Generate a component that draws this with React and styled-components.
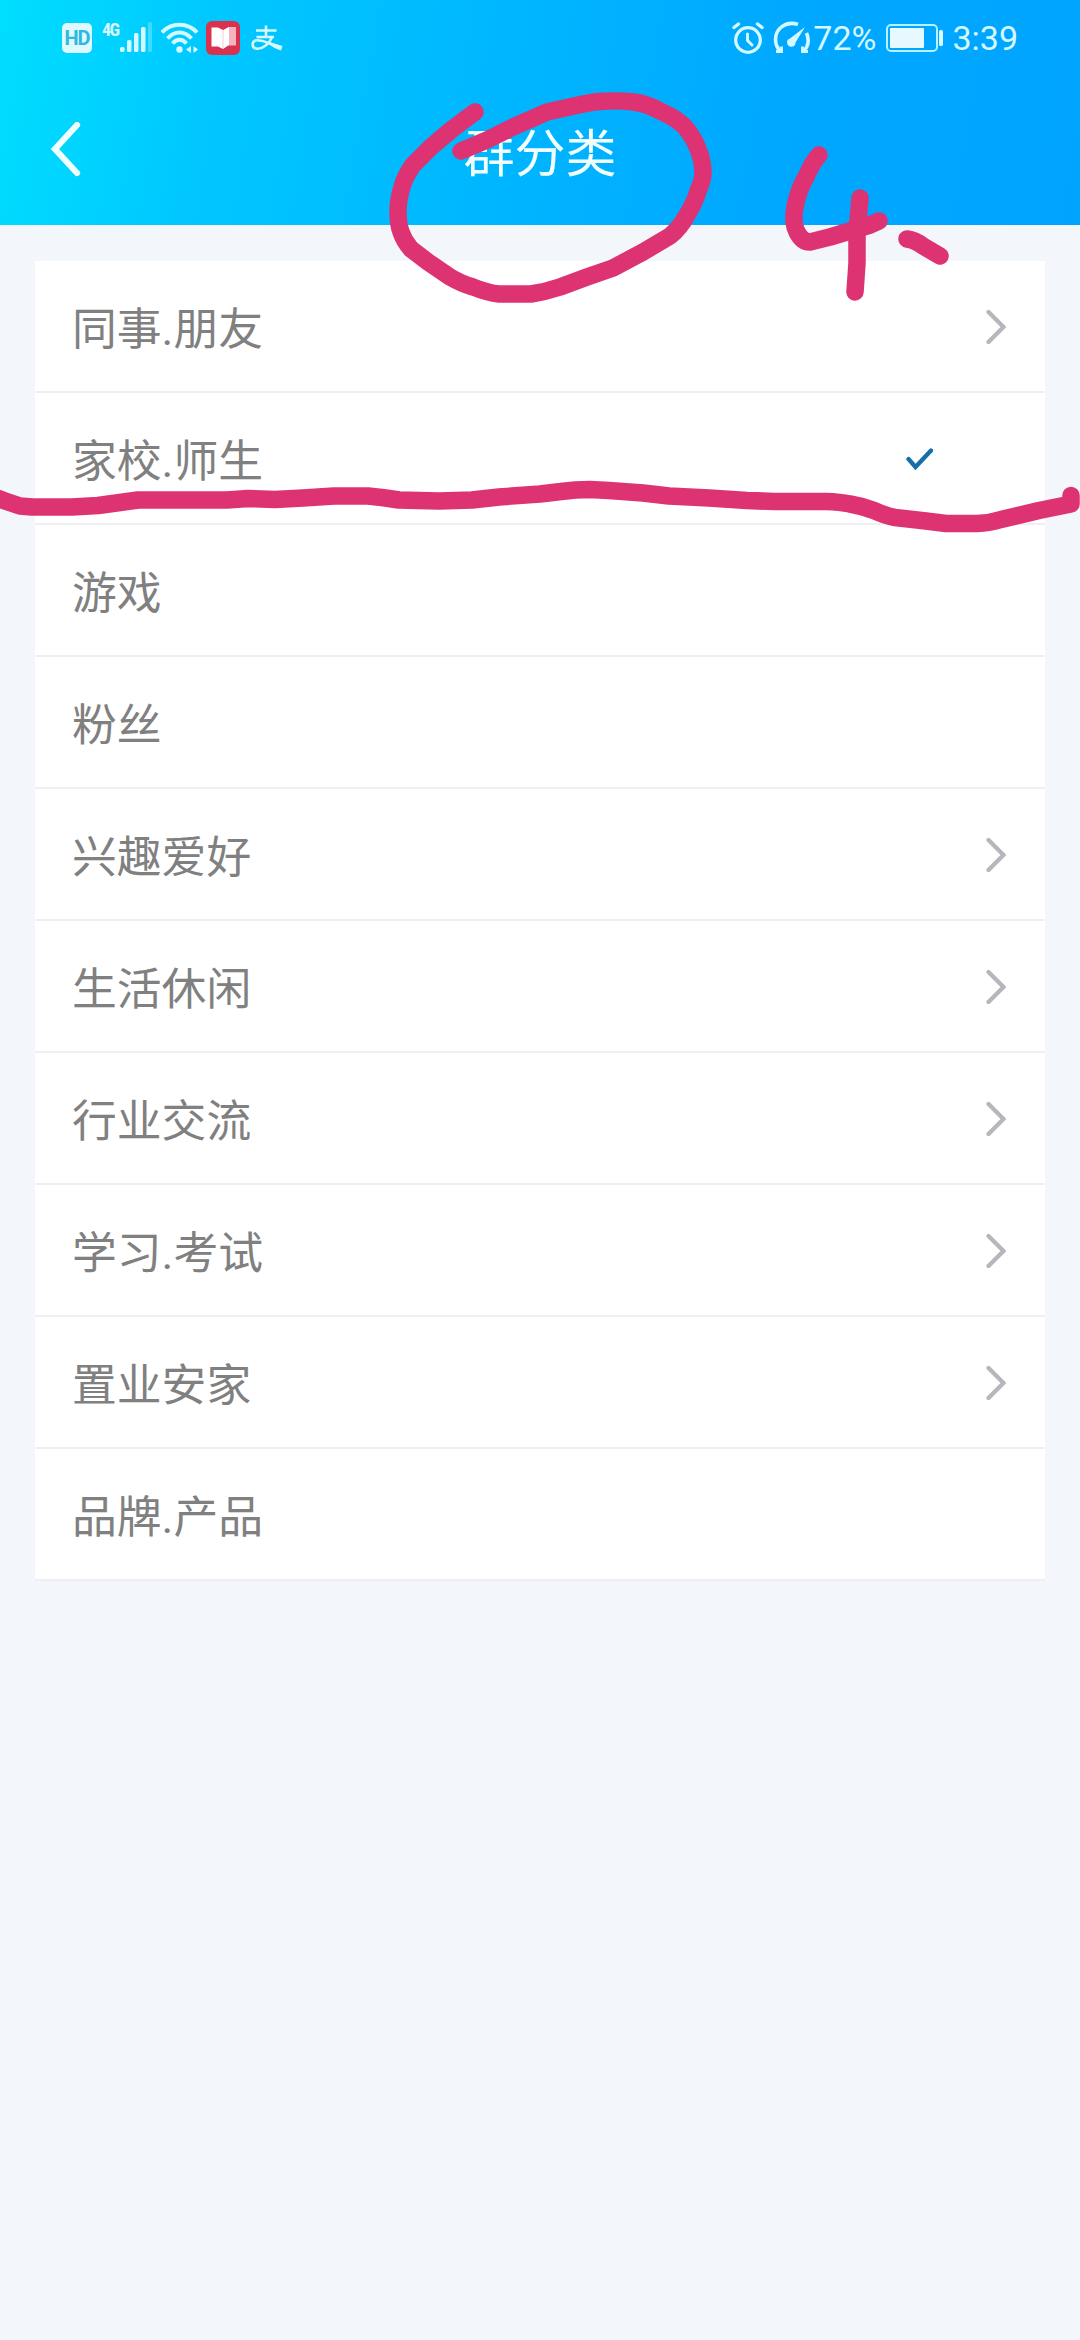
import React from 'react';
import styled, { createGlobalStyle } from 'styled-components';

const categories = [
  { name: '同事.朋友', more: true },
  { name: '家校.师生', checked: true },
  { name: '游戏' },
  { name: '粉丝' },
  { name: '兴趣爱好', more: true },
  { name: '生活休闲', more: true },
  { name: '行业交流', more: true },
  { name: '学习.考试', more: true },
  { name: '置业安家', more: true },
  { name: '品牌.产品' },
];

const StatusIcons = () => (
  <StatusBar>
    <StatusGroup>
      <HdBadge>HD</HdBadge>
      <NetworkLabel>4G</NetworkLabel>
      <StatusIcon width="32" height="34" viewBox="0 0 32 34">
        <g fill="#d4f9ff">
          <rect x="0" y="26" width="4.500" height="5" rx="1.500" />
          <rect x="7" y="19" width="4.500" height="12" rx="1.500" />
          <rect x="14" y="12" width="4.500" height="19" rx="1.500" />
          <rect x="21" y="6" width="4.500" height="25" rx="1.500" />
          <rect x="28" y="1" width="4" height="30" rx="1.500" opacity="0.3" />
        </g>
      </StatusIcon>
      <StatusIcon width="38" height="34" viewBox="0 0 38 34" $left={9}>
        <g fill="none" stroke="#d4f9ff" strokeWidth="4" strokeLinecap="butt">
          <path d="M1 11.500C10 1 27 1 36 11.500" />
          <path d="M6.500 17.500C13.500 9.500 23.500 9.500 30.500 17.500" />
          <path d="M11.500 22.500C16 17.500 21 17.500 25.500 22.500" />
        </g>
        <circle cx="18.500" cy="28.500" r="3.200" fill="#d4f9ff" />
        <path d="M30 25v7l-5-3.500zM32.500 25v7l4.500-3.500z" fill="#d4f9ff" />
      </StatusIcon>
      <StatusIcon width="34" height="34" viewBox="0 0 34 34" $left={7}>
        <rect width="34" height="34" rx="6" fill="#d9324f" />
        <path d="M22 6H30V24.500H22z" fill="#f5b3c0" />
        <path d="M5.500 6.500H12L17 9L23 6V24L17 28L12 25.500H5.500z" fill="#fff" />
        <path d="M17 9V27" stroke="#f3c3cc" strokeWidth="0.800" />
      </StatusIcon>
      <StatusIcon width="32" height="30" viewBox="0 0 32 30" $left={11}>
        <g fill="none" stroke="#d4f9ff" strokeWidth="2.600">
          <path d="M5 7.500H25.500M15 2.500V14M5.500 14H23" />
          <path d="M21.500 13.500C18 21 12 26 6 25.700C.3 25.300.300 18.300 5.500 17.300C11 16.500 18 20.500 29.500 24" />
        </g>
        <path d="M17 19L31.500 23L30 27.500C25 26 21 23.500 17 21z" fill="#d4f9ff" />
      </StatusIcon>
    </StatusGroup>

    <StatusGroup>
      <StatusIcon width="32" height="34" viewBox="0 0 32 34">
        <g fill="none" stroke="#d4f9ff" strokeLinecap="round">
          <circle cx="16" cy="19" r="12.300" strokeWidth="3.200" />
          <path d="M2 6.500L6.500 3M30 6.500L25.500 3" strokeWidth="3.400" />
          <path d="M15.500 13v6.500l4.500 4.500" strokeWidth="3" />
        </g>
      </StatusIcon>
      <StatusIcon width="38" height="34" viewBox="0 0 38 34" $left={9}>
        <g fill="none" stroke="#d4f9ff" strokeWidth="3.600">
          <path d="M25 3.400C13-.5 2.500 7.500 2.500 18.500C2.500 23.500 4.500 27.500 8 31" />
          <path d="M33.500 12C36.500 19 35 26 30 31" />
          <path d="M3 30.500H8.500V25.500M35 30.500H29.500V25.500" strokeWidth="2.800" />
        </g>
        <path d="M32 6L22.500 21.500a4.200 4.200 0 1 1-5.500-4z" fill="#d4f9ff" />
      </StatusIcon>
      <StatusText $left={2}>72%</StatusText>
      <StatusIcon width="58" height="28" viewBox="0 0 58 28" $left={9}>
        <rect x="2" y="1" width="50" height="26" rx="4" fill="none" stroke="#b4f2ff" strokeWidth="2" />
        <rect x="5" y="4" width="34" height="20" rx="1" fill="#e8f8ff" />
        <rect x="54" y="6" width="4" height="16" rx="1.500" fill="#d4f9ff" />
      </StatusIcon>
      <StatusText $left={9}>3:39</StatusText>
    </StatusGroup>
  </StatusBar>
);

const InkMarks = () => (
  <InkLayer viewBox="0 0 1080 600">
    <path d="M475 112L451 130L431 147L413 165Q405 176 402 187Q398 200 398 212Q398 224 401 232Q404 241 411 249L428 262L450 277Q462 284 473 287Q488 293 499 294H531Q545 292 560 287L587 277L613 268L643 252L670 236Q680 228 687 215Q695 202 698 191Q703 180 703 173Q703 161 698 149Q694 138 685 127Q676 118 662 112Q648 104 634 102Q620 100.500 608 101Q596 101 583 104L547 112L513 127L487 140L461 151" />
    <path d="M819 155Q812 163 807 175Q798 190 795 207Q792 223 797 232Q802 242 810 242L830 237L850 231L870 225L879 221" />
    <path d="M860 198L857 233V263L855 292" />
    <path d="M907 239Q915 240 923 246L940 256" />
    <path d="M-6 497L5 501L20 506L32 507H72L98 505.500L120 502.500L138 500H227L248 498.500L275 499.500L303 498L334 496H368Q384 497.500 399 500L439 501L472 500L499 497L540 494L561 491.500Q575 489.500 590 489.500L609 490.500L643 493L669 496L709 498L747 500.500L774 501.500H826Q840 502 850 504Q862 506 874 510.500Q886 516 895 517.500L926 521L946 523.500H977Q990 523 1001 519.500L1039 510.500L1071 504V495.500" />
  </InkLayer>
);

const App = () => {
  return (
    <Page>
      <GlobalStyle />
      <Header>
        <StatusIcons />
        <TitleBar>
          <BackButton aria-label="返回">
            <svg width="32" height="56" viewBox="0 0 32 56">
              <path d="M28 3L6 27L28 51" fill="none" stroke="#f2ffff" strokeWidth="6.200" strokeLinecap="round" />
            </svg>
          </BackButton>
          <Title>群分类</Title>
        </TitleBar>
      </Header>

      <List>
        {categories.map(({ name, more, checked }) => (
          <Row key={name} $checked={checked}>
            <RowLabel>{name}</RowLabel>
            {more && (
              <svg width="22" height="36" viewBox="0 0 22 36">
                <path d="M4.500 4L19.500 19L4.500 34" fill="none" stroke="#b6b6be" strokeWidth="4.300" strokeLinecap="round" />
              </svg>
            )}
            {checked && (
              <svg width="28" height="26" viewBox="0 0 28 26">
                <path d="M3.500 14L10.500 22L26 5.500" fill="none" stroke="#146fa9" strokeWidth="4.300" strokeLinecap="round" />
              </svg>
            )}
          </Row>
        ))}
      </List>
      <InkMarks />
    </Page>
  );
};

const GlobalStyle = createGlobalStyle`
  body {
    margin: 0;
    background-color: #f3f6fa;
  }
`;

const Page = styled.div`
  position: relative;
  width: 1080px;
  min-height: 2340px;
  overflow: hidden;
  background-color: #f3f6fa;
  font-family: 'Noto Sans CJK SC', sans-serif;
`;

const Header = styled.header`
  display: flex;
  flex-direction: column;
  height: 225px;
  background: linear-gradient(100deg, #00deff 0%, #00c7ff 20%, #00b5ff 48%, #00a7ff 74%, #00a4ff 100%);
`;

const StatusBar = styled.div`
  display: flex;
  align-items: center;
  justify-content: space-between;
  height: 76px;
  padding: 0 62px;
  box-sizing: border-box;
`;

const StatusGroup = styled.div`
  display: flex;
  align-items: center;
`;

const StatusIcon = styled.svg`
  flex: none;
  margin-left: ${({ $left }) => $left || 0}px;
`;

const HdBadge = styled.span`
  width: 30px;
  height: 30px;
  border-radius: 5px;
  background-color: #dcfaff;
  color: #2fb9de;
  font-family: Roboto, sans-serif;
  font-size: 20px;
  font-weight: 700;
  line-height: 31px;
  text-align: center;
  letter-spacing: -1px;
`;

const NetworkLabel = styled.span`
  align-self: flex-start;
  width: 18px;
  margin-left: 10px;
  color: #d4f9ff;
  font-family: 'Roboto Condensed', Roboto, sans-serif;
  font-size: 18px;
  font-weight: 700;
  line-height: 18px;
  letter-spacing: -1.5px;
  white-space: nowrap;
`;

const StatusText = styled.span`
  margin-left: ${({ $left }) => $left}px;
  color: #d4f9ff;
  font-family: Roboto, sans-serif;
  font-size: 34px;
  line-height: 40px;
`;

const TitleBar = styled.div`
  display: grid;
  grid-template-columns: 120px 1fr 120px;
  align-items: center;
  height: 147px;
`;

const BackButton = styled.button`
  display: flex;
  margin: 0;
  padding: 0 0 0 49px;
  border: none;
  background: none;
  cursor: pointer;
`;

const Title = styled.h1`
  margin: 0;
  color: #f2ffff;
  font-size: 51px;
  font-weight: 400;
  line-height: 72px;
  text-align: center;
`;

const List = styled.ul`
  margin: 36px 35px 0;
  padding: 0;
  list-style: none;
  background-color: #fff;
`;

const Row = styled.li`
  display: flex;
  align-items: center;
  justify-content: space-between;
  height: 132px;
  padding: 0 ${({ $checked }) => ($checked ? 112 : 39)}px 0 37px;
  border-bottom: 2px solid #efeff1;
  box-sizing: border-box;
`;

/* Roboto draws the dot, the CJK face everything else */
const RowLabel = styled.span`
  padding-top: 8px;
  color: #808080;
  font-family: Roboto, 'Noto Sans CJK SC', sans-serif;
  font-size: 44.8px;
  line-height: 64px;
`;

const InkLayer = styled.svg`
  position: absolute;
  top: 0;
  left: 0;
  width: 1080px;
  height: 600px;
  pointer-events: none;

  path {
    fill: none;
    stroke: #dd3373;
    stroke-width: 17.5px;
    stroke-linecap: round;
    stroke-linejoin: round;
  }
`;

export default App;
